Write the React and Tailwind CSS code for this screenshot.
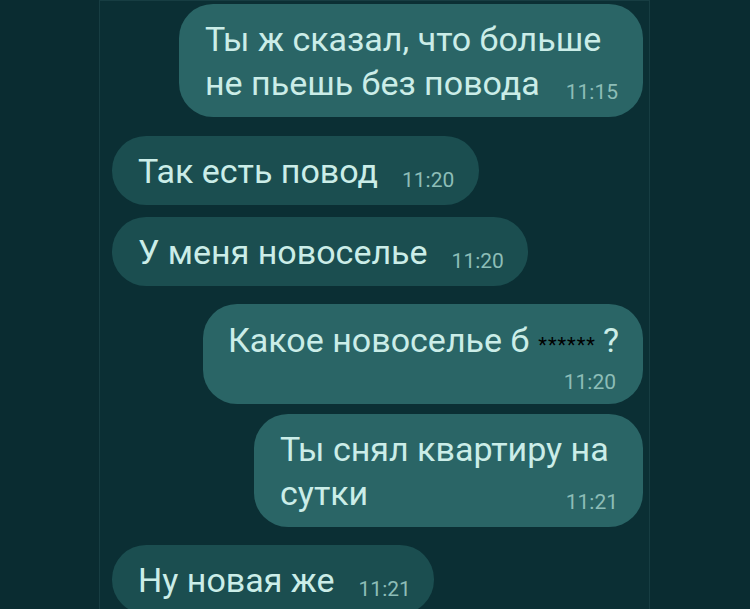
const messages = [
  { out: true, w: 'w-[464px]', lines: ['Ты ж сказал, что больше', 'не пьешь без повода'], time: '11:15', mt: 'mt-[3px]' },
  { out: false, w: 'w-[367px]', lines: ['Так есть повод'], time: '11:20', mt: 'mt-[19px]' },
  { out: false, w: 'w-[416px]', lines: ['У меня новоселье'], time: '11:20', mt: 'mt-[12px]' },
  { out: true, w: 'w-[440px]', censored: true, time: '11:20', mt: 'mt-[18px]' },
  { out: true, w: 'w-[389px]', lines: ['Ты снял квартиру на', 'сутки'], time: '11:21', mt: 'mt-[10px]' },
  { out: false, w: 'w-[322px]', lines: ['Ну новая же'], time: '11:21', mt: 'mt-[18px]' },
]

function Time({ children, className = '' }) {
  return (
    <span className={`shrink-0 text-[21px] leading-6 text-[#8dbdb7] ${className}`}>
      {children}
    </span>
  )
}

function Bubble({ msg }) {
  const bg = msg.out ? 'bg-[#2a6566] self-end' : 'bg-[#1b4e50] self-start'

  if (msg.censored) {
    return (
      <div className={`${msg.mt} ${msg.w} ${bg} rounded-[34px] pl-[25px] pr-[27px] pt-[14px] pb-[10px]`}>
        <p className="whitespace-nowrap leading-[44px]">
          Какое новоселье б
          <span className="ml-[9px] mr-[7px] text-[20px] tracking-[1px] text-black">******</span>
          ?
        </p>
        <div className="mt-[3px] flex justify-end">
          <Time>{msg.time}</Time>
        </div>
      </div>
    )
  }

  const last = msg.lines.length - 1
  return (
    <div className={`${msg.mt} ${msg.w} ${bg} rounded-[34px] pl-[26px] pr-[25px] pt-[13px] pb-[12px]`}>
      {msg.lines.map((line, i) =>
        i === last ? (
          <div key={i} className="flex items-end">
            <span className="whitespace-nowrap leading-[44px]">{line}</span>
            <Time className="mb-px ml-auto pl-6">{msg.time}</Time>
          </div>
        ) : (
          <p key={i} className="whitespace-nowrap leading-[44px]">
            {line}
          </p>
        )
      )}
    </div>
  )
}

export default function App() {
  return (
    <div className="h-[609px] w-[750px] overflow-hidden bg-[#0a2c31] font-['Roboto',sans-serif]">
      <div className="ml-[99px] flex h-full w-[551px] flex-col border-x border-t border-[#173d42] bg-[#0b2f34] pl-[12px] pr-[6px] text-[34px] text-[#cbede8]">
        {messages.map((msg, i) => (
          <Bubble key={i} msg={msg} />
        ))}
      </div>
    </div>
  )
}
